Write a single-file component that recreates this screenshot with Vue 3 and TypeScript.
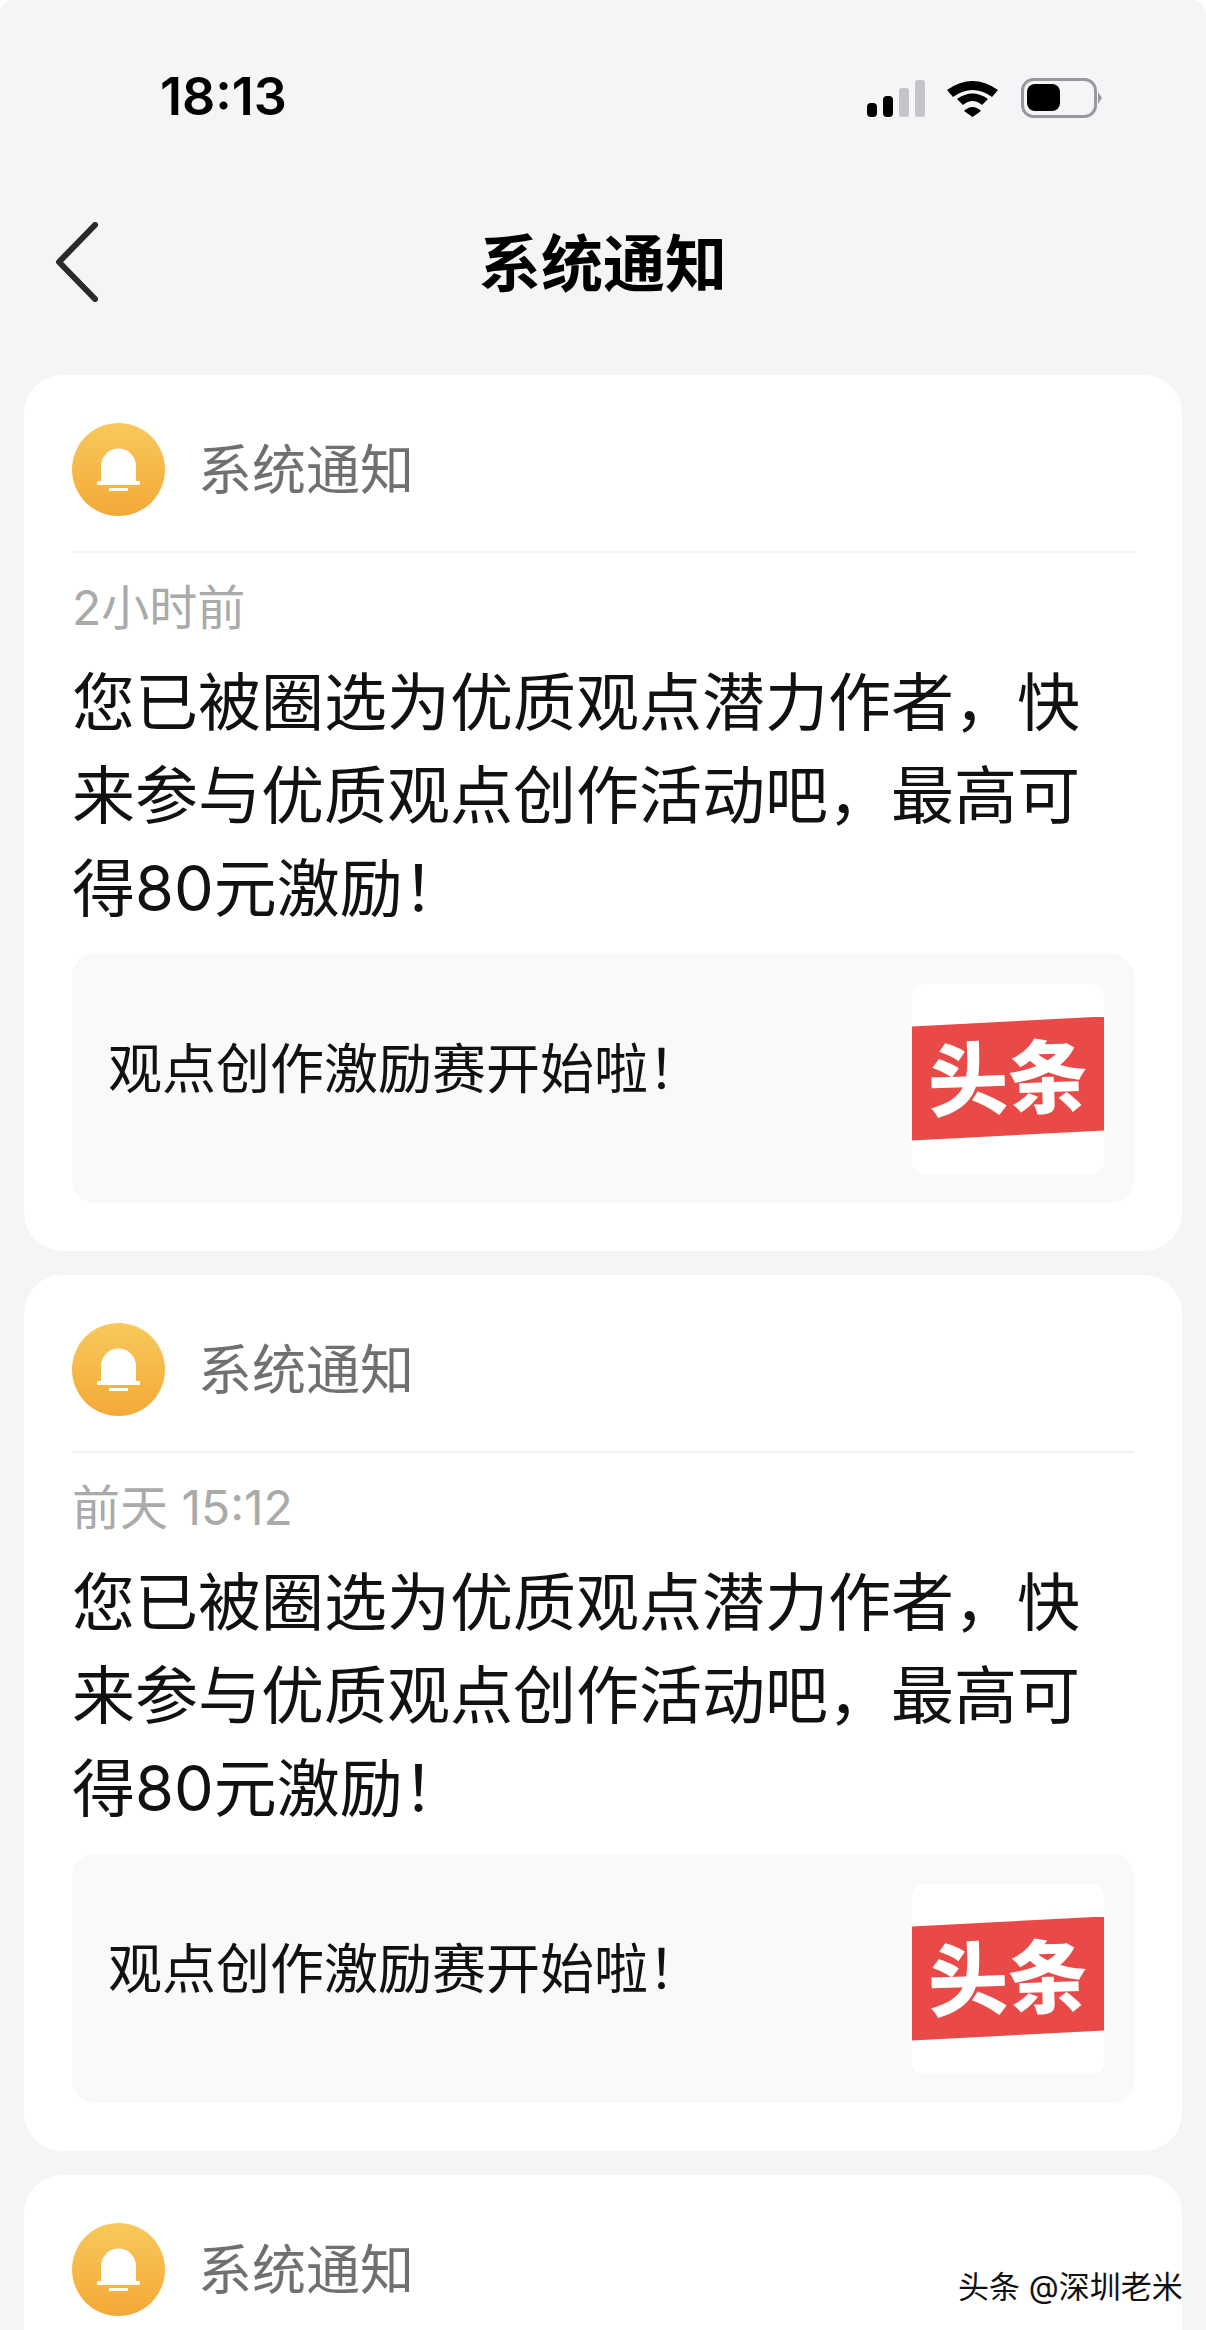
<script setup lang="ts">
const cards = [
  { id: 1, time: '2小时前' },
  { id: 2, time: '前天 15:12' },
  { id: 3, time: '' },
]

const message = '您已被圈选为优质观点潜力作者，快来参与优质观点创作活动吧，最高可得80元激励！'
const linkText = '观点创作激励赛开始啦！'
</script>

<template>
  <div class="page">
    <div class="status">
      <span class="clock">18:13</span>
      <div class="status-icons">
        <svg width="58" height="37" viewBox="0 0 58 37">
          <rect x="0" y="23" width="10" height="14" rx="4" fill="#000" />
          <rect x="16" y="16" width="10" height="21" rx="4" fill="#000" />
          <rect x="32" y="8" width="10" height="29" rx="3" fill="#c4c5c8" />
          <rect x="48" y="0" width="10" height="37" rx="3" fill="#c4c5c8" />
        </svg>
        <svg width="52" height="37" viewBox="0 0 52 37">
          <path d="M0 10 Q25.5 -8 51 10 L45 17 Q25.5 3 6 17 Z" fill="#000" />
          <path d="M10 19 Q25.5 8 41 19 L35 25 Q25.5 17 16 25 Z" fill="#000" />
          <path d="M17 31 Q25.5 23 34 31 L25.5 37 Z" fill="#000" />
        </svg>
        <svg width="82" height="40" viewBox="0 0 82 40">
          <rect x="1.5" y="1.5" width="73" height="37" rx="11" fill="none" stroke="#98999c" stroke-width="3" />
          <rect x="6" y="6" width="33" height="27" rx="8" fill="#000" />
          <path d="M77 14 L81 20 L77 26 Z" fill="#98999c" />
        </svg>
      </div>
    </div>

    <div class="nav">
      <svg class="back" width="44" height="80" viewBox="0 0 44 80">
        <path d="M40 3 L4 40 L40 77" fill="none" stroke="#2a2a2c" stroke-width="6" stroke-linecap="round" stroke-linejoin="round" />
      </svg>
      <h1 class="title">系统通知</h1>
    </div>

    <div class="list">
      <section v-for="card in cards" :key="card.id" class="card">
        <header class="card-head">
          <span class="avatar">
            <svg width="43" height="43" viewBox="0 0 43 43">
              <path d="M4 34 V18 a17.5 17.5 0 0 1 35 0 V34 Z" fill="#fff" />
              <rect x="0" y="33" width="43" height="4" rx="1" fill="#fff" />
              <rect x="12" y="40" width="19" height="3" fill="#fff" />
            </svg>
          </span>
          <span class="card-name">系统通知</span>
        </header>
        <div v-if="card.time" class="card-body">
          <p class="time">{{ card.time }}</p>
          <p class="message">{{ message }}</p>
          <div class="link">
            <span class="link-text">{{ linkText }}</span>
            <div class="thumb">
              <div class="banner"><span class="brand">头条</span></div>
            </div>
          </div>
        </div>
      </section>
    </div>

    <span class="watermark">头条 @深圳老米</span>
  </div>
</template>

<style>
html,
body {
  margin: 0;
  background: #fff;
}
</style>

<style scoped>
.page {
  position: relative;
  width: 1206px;
  height: 2330px;
  overflow: hidden;
  background: #f4f5f7;
  border-radius: 14px 14px 0 0;
  font-family: Inter, "Noto Sans CJK SC", sans-serif;
  color: #111;
}

.status {
  height: 196px;
  box-sizing: border-box;
  padding: 72px 103px 0 160px;
  display: flex;
  justify-content: space-between;
  align-items: flex-start;
}

.clock {
  font-size: 52px;
  line-height: 50px;
  font-weight: 600;
  color: #000;
}

.status-icons {
  display: flex;
  align-items: center;
  gap: 22px;
  margin-top: 6px;
}

.nav {
  position: relative;
  height: 179px;
  display: flex;
  justify-content: center;
}

.back {
  position: absolute;
  left: 55px;
  top: 26px;
}

.title {
  margin: 37px 0 0;
  font-size: 62px;
  line-height: 64px;
  font-weight: 700;
  color: #000;
}

.list {
  display: flex;
  flex-direction: column;
  gap: 24px;
  padding: 0 24px;
}

.card {
  background: #fff;
  border-radius: 38px;
  padding: 48px 48px;
  flex-shrink: 0;
}

.card-head {
  display: flex;
  align-items: center;
  gap: 33px;
  padding-bottom: 35px;
  border-bottom: 2px solid #f3f3f4;
}

.avatar {
  width: 93px;
  height: 93px;
  border-radius: 50%;
  background: linear-gradient(180deg, #f8c95c, #f3a937);
  display: flex;
  align-items: center;
  justify-content: center;
}

.card-name {
  margin-top: 2px;
  font-size: 54px;
  line-height: 60px;
  color: #707070;
}

.time {
  margin: 28px 0 0;
  font-size: 48px;
  line-height: 54px;
  color: #aaa;
}

.message {
  margin: 21px 0 0;
  font-size: 63px;
  line-height: 93px;
  color: #111;
}

.link {
  margin-top: 19px;
  height: 249px;
  box-sizing: border-box;
  padding: 30px;
  padding-left: 36px;
  border-radius: 22px;
  background: #f8f9fb;
  display: flex;
  align-items: center;
  justify-content: space-between;
}

.link-text {
  margin-bottom: 26px;
  font-size: 54px;
  color: #111;
}

.thumb {
  width: 192px;
  height: 190px;
  border-radius: 12px;
  background: #fff;
  display: flex;
  align-items: center;
  overflow: hidden;
}

.banner {
  width: 192px;
  height: 124px;
  background: #ea4a47;
  clip-path: polygon(0 10px, 100% 0, 100% 114px, 0 124px);
  display: flex;
  align-items: center;
  justify-content: center;
}

.brand {
  color: #fff;
  font-size: 80px;
  line-height: 90px;
  font-weight: 900;
  transform: rotate(-2deg);
}

.watermark {
  position: absolute;
  left: 958px;
  top: 2267px;
  font-size: 31px;
  line-height: 40px;
  color: #111;
  white-space: nowrap;
}
</style>
